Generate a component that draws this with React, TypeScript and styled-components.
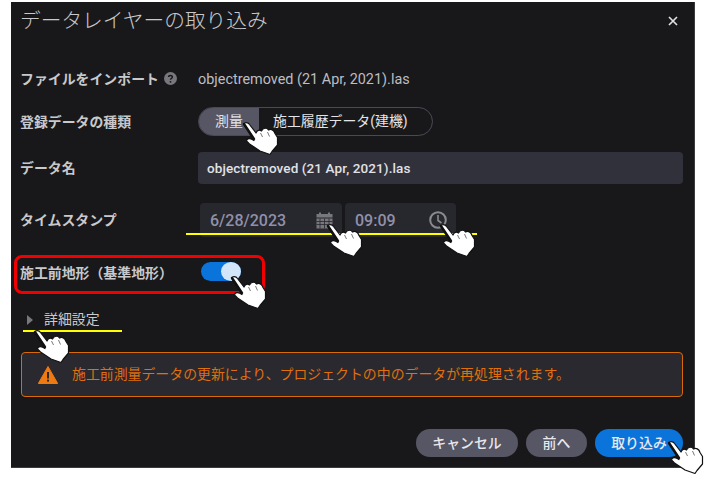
import React from "react";
import styled, { createGlobalStyle } from "styled-components";

const Global = createGlobalStyle`
  html, body { margin: 0; padding: 0; background: #fff; }
  body { font-family: Roboto, "Noto Sans CJK JP", sans-serif; }
`;

const Page = styled.div`
  position: relative;
  width: 706px;
  height: 483px;
  overflow: hidden;
  background: #fff;
  padding: 2px 0 0 11px;
  box-sizing: border-box;
`;

const Dialog = styled.div`
  width: 684px;
  height: 466px;
  box-sizing: border-box;
  background: #18181b;
  border-right: 1px solid #3a3a3f;
  border-bottom: 1px solid #3a3a3f;
  padding: 0 11px 0 9px;
  display: flex;
  flex-direction: column;
  color: #d6d6da;
`;

const Header = styled.div`
  height: 38px;
  display: flex;
  align-items: center;
  justify-content: space-between;
`;

const Title = styled.div`
  font-size: 20.7px;
  font-weight: 300;
  color: #c9c9cc;
  line-height: 38px;
`;

const Close = styled.svg`
  width: 10px;
  height: 10px;
  margin-right: 5px;
  margin-top: -1px;
`;

const Row = styled.div<{ $h: number; $mt: number }>`
  display: flex;
  align-items: center;
  height: ${(p) => p.$h}px;
  margin-top: ${(p) => p.$mt}px;
`;

const Label = styled.div<{ $shift?: number }>`
  width: 178px;
  flex: none;
  display: flex;
  align-items: center;
  gap: 5px;
  font-size: 13.9px;
  font-weight: 700;
  color: #c9c9cc;
  white-space: nowrap;
  position: relative;
  top: ${(p) => p.$shift ?? -1}px;
`;

const Value = styled.div`
  font-size: 14.4px;
  letter-spacing: 0.01px;
  color: #bdbdc2;
`;

const Segments = styled.div`
  display: flex;
  width: 235px;
  height: 29px;
  box-sizing: border-box;
  border: 1px solid #4a4a55;
  border-radius: 15px;
  overflow: hidden;
`;

const Segment = styled.div<{ $on?: boolean }>`
  display: flex;
  align-items: center;
  justify-content: center;
  font-size: 13.9px;
  width: ${(p) => (p.$on ? "60px" : "auto")};
  padding-left: ${(p) => (p.$on ? "0" : "14px")};
  padding-bottom: 3px;
  background: ${(p) => (p.$on ? "#565664" : "transparent")};
  color: #e4e4e8;
  white-space: nowrap;
`;

const TextField = styled.div`
  flex: 1;
  height: 32px;
  box-sizing: border-box;
  padding: 0 0 1px 9px;
  display: flex;
  align-items: center;
  background: #31313b;
  border-radius: 4px;
  font-size: 13.5px;
  font-weight: 500;
  letter-spacing: 0.1px;
  color: #e2e2e6;
`;

const Pickers = styled.div`
  display: flex;
  gap: 3px;
  margin-left: 2px;
`;

const Picker = styled.div<{ $w: number }>`
  width: ${(p) => p.$w}px;
  height: 34px;
  box-sizing: border-box;
  padding: 0 9px 0 10px;
  background: #27272e;
  border-radius: 4px;
  display: flex;
  align-items: center;
  justify-content: space-between;
  font-size: 16px;
  font-weight: 500;
  color: #9090aa;
`;

const Toggle = styled.div`
  width: 40px;
  height: 19px;
  margin-left: 3px;
  border-radius: 10px;
  background: #0a74da;
  position: relative;
`;

const Knob = styled.div`
  position: absolute;
  right: 0;
  top: 0;
  width: 20px;
  height: 19px;
  border-radius: 50%;
  background: #d3e5f8;
`;

const Expander = styled.div`
  display: flex;
  align-items: center;
  height: 20px;
  margin-top: 29px;
  padding-left: 7px;
  gap: 11px;
  font-size: 13.9px;
  color: #c9c9cc;
`;

const ExpanderText = styled.span`
  position: relative;
  top: -2px;
`;

const Caret = styled.svg`
  width: 6px;
  height: 10px;
`;

const Alert = styled.div`
  height: 45px;
  margin-top: 22px;
  margin-left: 1px;
  box-sizing: border-box;
  border: 1px solid #d86a0a;
  border-radius: 4px;
  background: #29292f;
  display: flex;
  align-items: center;
  padding-left: 16px;
  gap: 14px;
  font-size: 13.9px;
  color: #e06f0c;
`;

const AlertText = styled.span`
  position: relative;
  top: -2px;
`;

const Footer = styled.div`
  display: flex;
  justify-content: flex-end;
  gap: 8px;
  margin-top: 32px;
`;

const Button = styled.div<{ $w: number; $primary?: boolean }>`
  width: ${(p) => p.$w}px;
  height: 28px;
  padding-bottom: 3px;
  box-sizing: border-box;
  border-radius: 14px;
  display: flex;
  align-items: center;
  justify-content: center;
  font-size: 13.9px;
  font-weight: 500;
  color: #e8e8ec;
  background: ${(p) => (p.$primary ? "#0a74da" : "#565664")};
`;

const RedBox = styled.div`
  position: absolute;
  left: 14px;
  top: 255px;
  width: 251px;
  height: 39px;
  box-sizing: border-box;
  border: 3px solid #f00000;
  border-radius: 8px;
`;

const YellowLine = styled.div<{ $x: number; $y: number; $w: number }>`
  position: absolute;
  left: ${(p) => p.$x}px;
  top: ${(p) => p.$y}px;
  width: ${(p) => p.$w}px;
  height: 2px;
  background: #ffff00;
`;

const HandSvg = styled.svg<{ $x: number; $y: number }>`
  position: absolute;
  left: ${(p) => p.$x}px;
  top: ${(p) => p.$y}px;
  width: 37px;
  height: 35px;
`;

function Hand({ x, y }: { x: number; y: number }) {
  return (
    <HandSvg $x={x - 2} $y={y - 2} viewBox="-2 -2 37 35">
      <path
        d="M-0.5 1 C0.5 -1 4 -1 5.5 1.5 L12 10 C13 7 15.5 6.5 17.5 8 C19 4.5 23 4.5 24.5 7 C27 5.5 30 7 31 10.5 L33.5 14.5 L33.5 22 L28 28.5 L26 31.5 L16 28 L5.5 21 L2.5 18 C3 15.5 6 14.5 10 17.5 Z"
        fill="#fff"
        stroke="#111"
        strokeWidth="1.2"
        strokeLinejoin="round"
      />
      <path d="M0 1 L10 16" stroke="#111" strokeWidth="2.4" strokeLinecap="round" />
      <path d="M16.5 10 L18.5 14 M23.5 9 L25.5 13.5" stroke="#555" strokeWidth="0.8" fill="none" />
    </HandSvg>
  );
}

export default function App() {
  return (
    <Page>
      <Global />
      <Dialog>
        <Header>
          <Title>データレイヤーの取り込み</Title>
          <Close viewBox="0 0 10 10">
            <path d="M1 1 L9 9 M9 1 L1 9" stroke="#e0e0e4" strokeWidth="1.7" />
          </Close>
        </Header>
        <Row $h={20} $mt={29}>
          <Label>
            ファイルをインポート
            <svg width="13" height="13" viewBox="0 0 13 13">
              <circle cx="6.5" cy="6.5" r="6.5" fill="#77777c" />
              <path d="M4.6 5 C4.6 2.9 8.4 2.9 8.4 5 C8.4 6.3 6.5 6.2 6.5 7.8" stroke="#18181b" strokeWidth="1.4" fill="none" />
              <circle cx="6.5" cy="9.8" r="0.9" fill="#18181b" />
            </svg>
          </Label>
          <Value>objectremoved (21 Apr, 2021).las</Value>
        </Row>
        <Row $h={29} $mt={18}>
          <Label>登録データの種類</Label>
          <Segments>
            <Segment $on>測量</Segment>
            <Segment>施工履歴データ(建機)</Segment>
          </Segments>
        </Row>
        <Row $h={32} $mt={16}>
          <Label>データ名</Label>
          <TextField>objectremoved (21 Apr, 2021).las</TextField>
        </Row>
        <Row $h={34} $mt={19}>
          <Label>タイムスタンプ</Label>
          <Pickers>
            <Picker $w={142}>
              6/28/2023
              <svg width="17" height="17" viewBox="0 0 17 17">
                <rect x="3" y="0.5" width="2" height="2.5" fill="#77777c" />
                <rect x="12" y="0.5" width="2" height="2.5" fill="#77777c" />
                <rect x="0.5" y="2" width="16" height="3.5" fill="#77777c" />
                <rect x="0.5" y="6.5" width="16" height="10" fill="#77777c" />
                <path d="M0.5 9.5H16.5M0.5 12.5H16.5M4 6.5V16.5M8.5 6.5V16.5M13 6.5V16.5" stroke="#27272e" strokeWidth="0.8" />
              </svg>
            </Picker>
            <Picker $w={111}>
              09:09
              <svg width="18" height="18" viewBox="0 0 18 18">
                <circle cx="9" cy="9" r="7.8" stroke="#8a8a8f" strokeWidth="2" fill="none" />
                <path d="M9 4V9.5L12.5 12" stroke="#8a8a8f" strokeWidth="1.6" fill="none" />
              </svg>
            </Picker>
          </Pickers>
        </Row>
        <Row $h={19} $mt={25}>
          <Label $shift={0}>施工前地形（基準地形）</Label>
          <Toggle>
            <Knob />
          </Toggle>
        </Row>
        <Expander>
          <Caret viewBox="0 0 6 10">
            <path d="M0 0 L6 5 L0 10 Z" fill="#77777c" />
          </Caret>
          <ExpanderText>詳細設定</ExpanderText>
        </Expander>
        <Alert>
          <svg width="20" height="18" viewBox="0 0 20 18">
            <path d="M10 0.5 L19.7 17.5 H0.3 Z" fill="#f07a12" stroke="#f07a12" strokeLinejoin="round" />
            <rect x="9" y="6" width="2" height="6.5" fill="#29292f" />
            <rect x="9" y="13.6" width="2" height="2" fill="#29292f" />
          </svg>
          <AlertText>施工前測量データの更新により、プロジェクトの中のデータが再処理されます。</AlertText>
        </Alert>
        <Footer>
          <Button $w={102}>キャンセル</Button>
          <Button $w={61}>前へ</Button>
          <Button $w={88} $primary>取り込み</Button>
        </Footer>
      </Dialog>
      <RedBox />
      <YellowLine $x={186} $y={233} $w={291} />
      <YellowLine $x={23} $y={330} $w={99} />
      <Hand x={244} y={123} />
      <Hand x={328} y={225} />
      <Hand x={441} y={225} />
      <Hand x={232} y={277} />
      <Hand x={35} y={331} />
      <Hand x={669} y={442} />
    </Page>
  );
}
